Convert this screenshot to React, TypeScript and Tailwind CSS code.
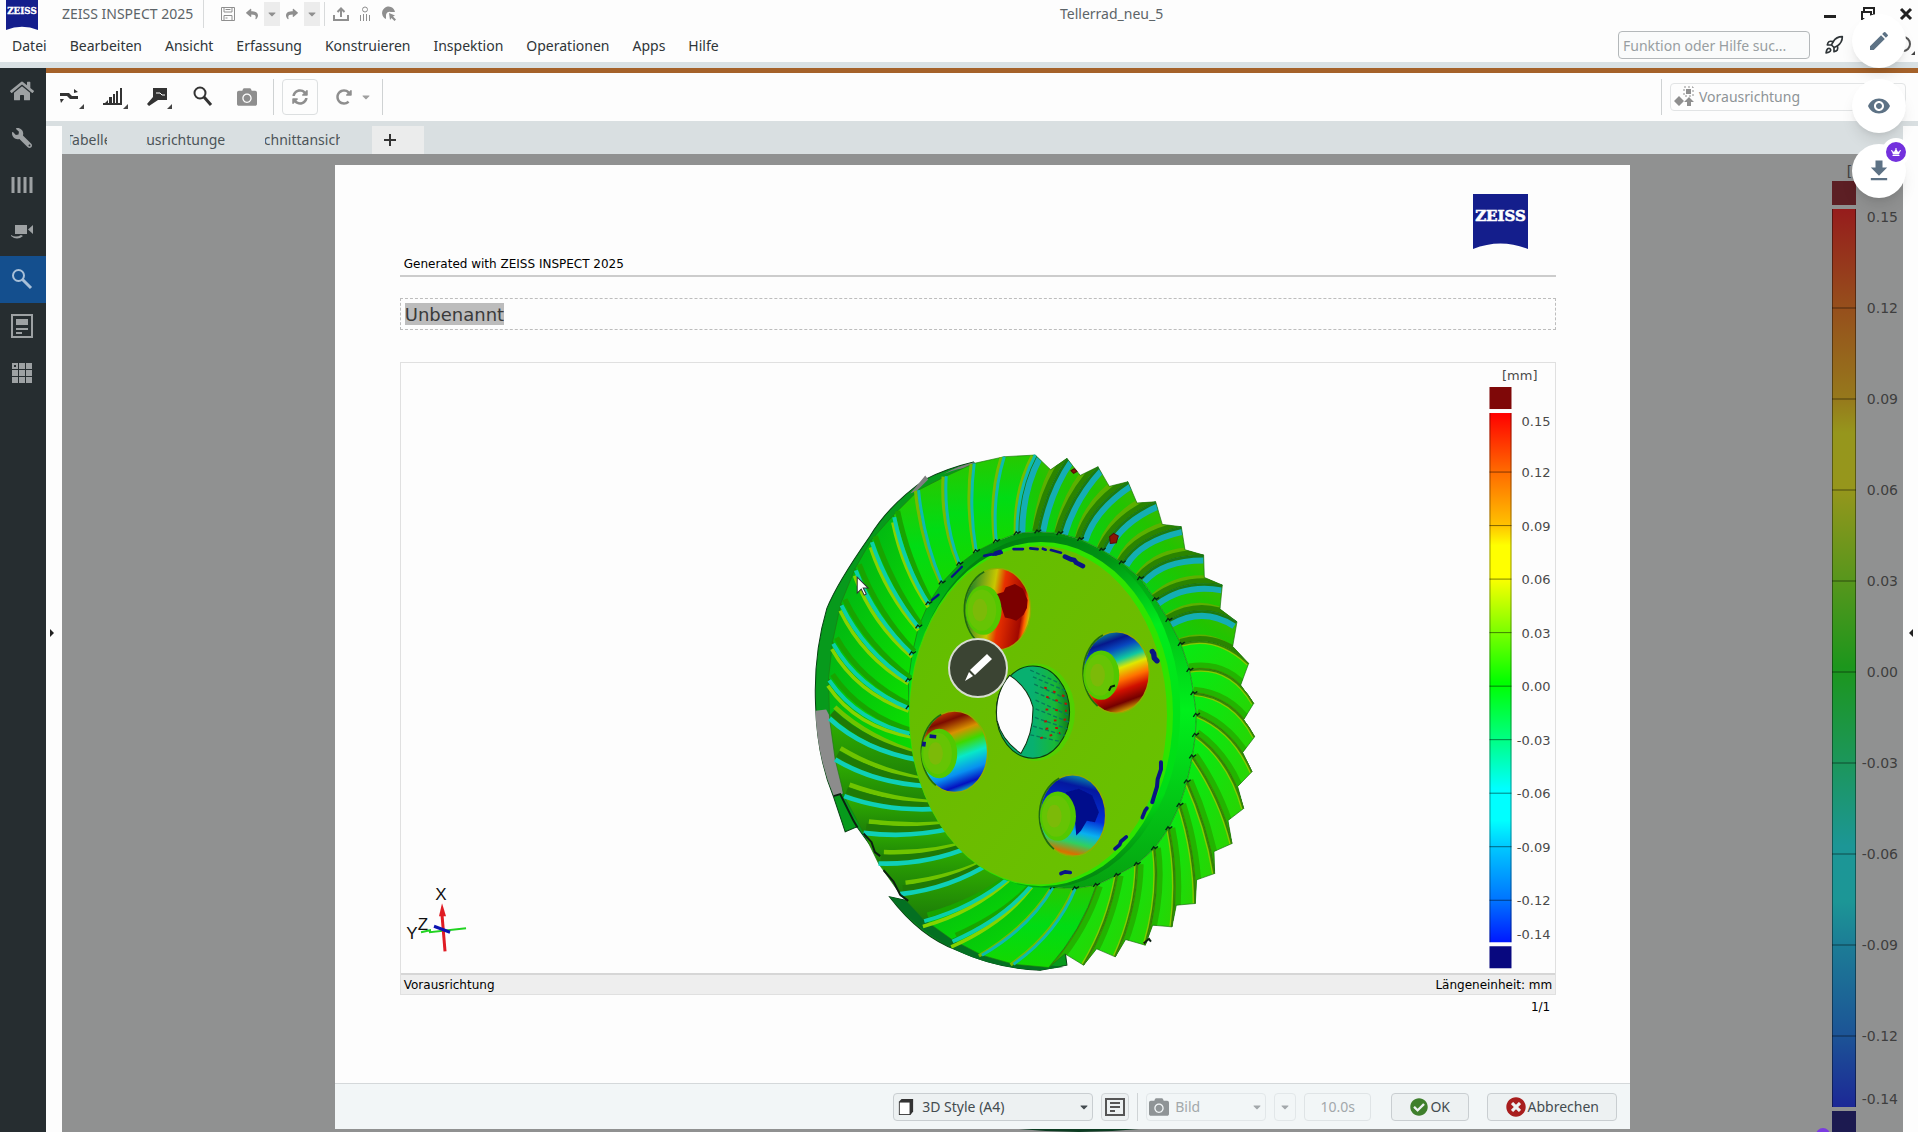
import type { ReactNode } from 'react'
import {
  FaCamera,
  FaCaretDown,
  FaCheckCircle,
  FaCrown,
  FaHome,
  FaRedoAlt,
  FaReply,
  FaShare,
  FaSyncAlt,
  FaTimesCircle,
  FaWrench,
} from 'react-icons/fa'
import { MdEdit, MdFileDownload, MdVisibility } from 'react-icons/md'
import { Rocket } from 'lucide-react'

type ToothKind = 'left' | 'top' | 'right' | 'bottom' | 'shade'
type Tooth = { p: [number, number, number, number, number, number]; kind: ToothKind }

const MENU = ['Datei', 'Bearbeiten', 'Ansicht', 'Erfassung', 'Konstruieren', 'Inspektion', 'Operationen', 'Apps', 'Hilfe']

// tip, control and root point of every tooth flank, clockwise from twelve o'clock
const TEETH: Tooth[] = [
  { p: [612, 50, 575, 170, 588, 304], kind: 'top' },
  { p: [705, 45, 650, 150, 650, 280], kind: 'top' },
  { p: [800, 55, 735, 150, 712, 275], kind: 'right' },
  { p: [893, 80, 810, 170, 778, 280], kind: 'right' },
  { p: [983, 125, 870, 200, 840, 298], kind: 'right' },
  { p: [1066, 185, 950, 235, 905, 330], kind: 'right' },
  { p: [1143, 260, 1010, 290, 965, 368], kind: 'right' },
  { p: [1210, 345, 1080, 345, 1020, 415], kind: 'right' },
  { p: [1266, 435, 1150, 415, 1065, 478], kind: 'right' },
  { p: [1310, 545, 1210, 480, 1105, 540], kind: 'right' },
  { p: [1345, 670, 1250, 580, 1142, 612], kind: 'right' },
  { p: [1360, 790, 1290, 670, 1168, 690], kind: 'bottom' },
  { p: [1363, 890, 1300, 770, 1180, 760], kind: 'bottom' },
  { p: [1355, 995, 1300, 870, 1188, 825], kind: 'bottom' },
  { p: [1330, 1105, 1290, 960, 1185, 885], kind: 'bottom' },
  { p: [1295, 1210, 1260, 1070, 1176, 950], kind: 'bottom' },
  { p: [1243, 1300, 1220, 1160, 1160, 1025], kind: 'bottom' },
  { p: [1185, 1390, 1185, 1240, 1138, 1095], kind: 'bottom' },
  { p: [1115, 1460, 1135, 1310, 1105, 1165], kind: 'bottom' },
  { p: [1035, 1515, 1080, 1360, 1062, 1225], kind: 'bottom' },
  { p: [945, 1550, 1008, 1410, 1010, 1272], kind: 'bottom' },
  { p: [850, 1575, 925, 1450, 950, 1305], kind: 'bottom' },
  { p: [745, 1582, 845, 1470, 888, 1335], kind: 'bottom' },
  { p: [640, 1572, 770, 1480, 825, 1345], kind: 'top' },
  { p: [545, 1545, 690, 1460, 758, 1342], kind: 'top' },
  { p: [455, 1498, 610, 1430, 695, 1330], kind: 'left' },
  { p: [370, 1437, 520, 1395, 630, 1306], kind: 'left' },
  { p: [300, 1362, 450, 1345, 570, 1268], kind: 'shade' },
  { p: [235, 1270, 380, 1275, 515, 1218], kind: 'shade' },
  { p: [190, 1178, 330, 1195, 462, 1163], kind: 'shade' },
  { p: [132, 1068, 260, 1115, 415, 1106], kind: 'shade' },
  { p: [105, 958, 220, 1028, 380, 1038], kind: 'shade' },
  { p: [88, 835, 190, 930, 357, 960], kind: 'shade' },
  { p: [85, 715, 170, 840, 338, 880], kind: 'left' },
  { p: [97, 605, 170, 735, 326, 802], kind: 'left' },
  { p: [122, 490, 190, 630, 325, 720], kind: 'left' },
  { p: [165, 385, 220, 530, 336, 640], kind: 'left' },
  { p: [213, 300, 260, 440, 355, 560], kind: 'left' },
  { p: [280, 225, 310, 370, 385, 490], kind: 'left' },
  { p: [355, 150, 370, 300, 425, 428], kind: 'top' },
  { p: [438, 108, 430, 250, 478, 372], kind: 'top' },
  { p: [522, 70, 505, 200, 528, 334], kind: 'top' },
]

const FLANK: Record<ToothKind, string> = {
  left: 'url(#flankLeft)',
  top: 'url(#flankTop)',
  right: 'url(#flankRight)',
  bottom: 'url(#flankBottom)',
  shade: 'url(#flankShade)',
}

const isClipped = ({ kind }: Tooth) => kind === 'right' || kind === 'bottom'

const mix = (a: number, b: number, t: number) => Math.round(a + (b - a) * t)

function flankPath(prev: Tooth, cur: Tooth) {
  const [ax, ay, bx, by, cx, cy] = prev.p
  const [dx, dy, ex, ey, fx, fy] = cur.p
  // gap between two tooth ends, pulled in towards the hub
  const nx = mix(mix(ax, dx, 0.5), 715, 0.05)
  const ny = mix(mix(ay, dy, 0.5), 825, 0.05)
  const notch = isClipped(cur) ? `L${nx} ${ny}` : ''
  return `M${dx} ${dy}Q${ex} ${ey} ${fx} ${fy}L${cx} ${cy}Q${bx} ${by} ${ax} ${ay}${notch}Z`
}

function edgePath({ p }: Tooth) {
  return `M${p[0]} ${p[1]}Q${p[2]} ${p[3]} ${p[4]} ${p[5]}`
}

function shifted({ p, kind }: Tooth, dx: number, dy: number) {
  return edgePath({ kind, p: [p[0] + dx, p[1] + dy, p[2] + dx, p[3] + dy, p[4] + dx / 2, p[5] + dy / 2] })
}

// teeth on the right half show their own end faces, so their bands stay inside the flank
function ClippedTooth({ id, prev, tooth }: { id: string; prev: Tooth; tooth: Tooth }) {
  const d = flankPath(prev, tooth)
  return (
    <g fill="none">
      <clipPath id={id}>
        <path d={d} />
      </clipPath>
      <path d={d} fill={FLANK[tooth.kind]} />
      {tooth.kind === 'right' ? (
        <g clipPath={`url(#${id})`}>
          <path d={edgePath(prev)} stroke="#14aeb4" strokeWidth="50" />
          <path d={edgePath(prev)} stroke="#1c7a10" strokeWidth="14" />
          <path d={shifted(tooth, -15, -17)} stroke="#5cb000" strokeWidth="16" />
          <path d={edgePath(tooth)} stroke="#2a8400" strokeWidth="32" />
        </g>
      ) : (
        <g clipPath={`url(#${id})`}>
          <path d={edgePath(prev)} stroke="#84cc00" strokeWidth="16" />
          <path d={edgePath(prev)} stroke="#3f8a00" strokeWidth="8" />
          <path d={edgePath(tooth)} stroke="#22b400" strokeWidth="40" />
          <path d={edgePath(tooth)} stroke="#3f8a00" strokeWidth="8" />
        </g>
      )}
      <path d={d} stroke="#1d7010" strokeWidth="2" />
    </g>
  )
}

function ToothEdge({ tooth }: { tooth: Tooth }) {
  const rx = tooth.p[4]
  const ry = tooth.p[5]
  const nick = <path d={`M${rx - 9} ${ry + 5}l7 -10 5 5 8 -6`} stroke="#042a10" strokeWidth="4" />
  if (isClipped(tooth)) {
    return <g fill="none">{nick}</g>
  }
  if (tooth.kind === 'shade') {
    return (
      <g fill="none">
        <path d={shifted(tooth, 16, -34)} stroke="#6fc400" strokeWidth="14" />
        <path d={shifted(tooth, 8, -17)} stroke="#1f7a06" strokeWidth="20" />
        <path d={edgePath(tooth)} stroke="#0fd0b8" strokeWidth="14" />
        {nick}
      </g>
    )
  }
  if (tooth.kind === 'left') {
    return (
      <g fill="none">
        <path d={shifted(tooth, 12, -12)} stroke="#18a400" strokeWidth="16" />
        <path d={shifted(tooth, -2, 22)} stroke="#86d400" strokeWidth="11" />
        <path d={shifted(tooth, 2, 6)} stroke="#0ad0a8" strokeWidth="12" />
        {nick}
      </g>
    )
  }
  return (
    <g fill="none">
      <path d={shifted(tooth, -9, 2)} stroke="#74bc00" strokeWidth="10" />
      <path d={edgePath(tooth)} stroke="#0cbcae" strokeWidth="9" />
      {nick}
    </g>
  )
}

function Bore({ cx, cy, fill, bossX, bossY, children }: { cx: number; cy: number; fill: string; bossX: number; bossY: number; children?: ReactNode }) {
  return (
    <g>
      <ellipse cx={cx} cy={cy} rx="99" ry="122" fill={fill} stroke="#8fae00" strokeWidth="4" />
      <path d={`M${cx - 40} ${cy - 112}A99 122 0 0 0 ${cx - 56} ${cy + 101}`} fill="none" stroke="#1f6a10" strokeWidth="5" />
      {children}
      <ellipse cx={bossX + 5} cy={bossY} rx="54" ry="74" fill="#52c800" />
      <ellipse cx={bossX} cy={bossY} rx="43" ry="62" fill="#66c404" />
      <ellipse cx={bossX - 6} cy={bossY} rx="22" ry="34" fill="#7cba08" />
    </g>
  )
}

function Gear() {
  const rim = TEETH.map(({ p }) => `${p[4]},${p[5]}`).join(' ')
  return (
    <g transform="translate(399 77) scale(0.3333)">
      <path d="M520 66Q440 85 375 118Q265 195 208 290Q110 430 80 505Q40 640 46 790Q50 950 100 1070L135 1175L170 1160L300 1340L360 1390L268 1370Q360 1490 470 1530Q590 1585 720 1590L800 1575L700 800Z" fill="#079a1c" stroke="#064012" strokeWidth="3" />
      <path d="M268 1370Q440 1580 720 1590L790 1580Q560 1560 370 1437L330 1385Z" fill="#047022" />
      <path d="M46 812L78 808L108 865L128 1060L102 1070Q50 950 46 812Z" fill="#8c8c8c" />
      <path d="M330 160Q360 125 375 106L384 118L350 152ZM430 102Q480 75 524 66L522 80Q470 84 430 102Z" fill="#7e7e7e" />
      <polygon points={rim} fill="url(#rim)" />
      {TEETH.map((tooth, i) => {
        const prev = TEETH[(i + TEETH.length - 1) % TEETH.length]
        if (isClipped(tooth)) {
          return <ClippedTooth key={i} id={`tooth${i}`} prev={prev} tooth={tooth} />
        }
        return <path key={i} d={flankPath(prev, tooth)} fill={FLANK[tooth.kind]} stroke="#1d7a10" strokeWidth="2" />
      })}
      {TEETH.map((tooth, i) => (
        <ToothEdge key={i} tooth={tooth} />
      ))}
      <path d="M100 1068l20 -6 40 80 12 20M190 1180l24 26 10 30 16 12M250 1290l30 34 20 40 24 18M1030 1510l16 -14 6 8" fill="none" stroke="#0b2010" strokeWidth="6" />

      <ellipse cx="735" cy="815" rx="405" ry="528" fill="url(#groove)" />
      <ellipse cx="722" cy="822" rx="396" ry="516" fill="#2ee400" />
      <ellipse cx="714" cy="825" rx="386" ry="508" fill="url(#face)" />
      <g fill="none" stroke="#0a1484" strokeLinecap="round" strokeLinejoin="round">
        <path d="M552 347l22 -4M578 344l26 -6M640 327l28 0M690 325l22 2M752 330l30 8M728 326l8 3" strokeWidth="8" />
        <path d="M794 350l18 8 10 2 6 8 20 10M586 340l14 -4" strokeWidth="14" />
        <path d="M1056 634l4 6 2 14 8 8" strokeWidth="16" />
        <path d="M1082 966l0 22 -10 30 -2 22 -14 46" strokeWidth="12" />
        <path d="M1040 1104l-6 8 -8 20M978 1190l-16 14 -4 10 -14 12M782 1300l12 -5 16 2" strokeWidth="11" />
        <path d="M455 410l30 -30M395 480l20 -16" strokeWidth="7" />
      </g>

      <Bore cx={592} cy={507} fill="url(#boreA)" bossX={545} bossY={510}>
        <path d="M590 462l20 -6 6 -14 28 -10 24 14 14 34 -2 24 -10 20 -22 18 -16 -6 -18 -4 -10 -30 -14 -16z" fill="#7c0000" filter="url(#soften)" />
      </Bore>
      <Bore cx={948} cy={697} fill="url(#boreB)" bossX={898} bossY={705} />
      <path d="M926 752l6 -12 12 -4" fill="none" stroke="#082008" strokeWidth="6" />
      <Bore cx={463} cy={935} fill="url(#boreC)" bossX={412} bossY={940} />
      <path d="M388 888l20 2M372 905l-2 14" fill="none" stroke="#0a1484" strokeWidth="11" />
      <Bore cx={817} cy={1126} fill="url(#boreD)" bossX={768} bossY={1128}>
        <path d="M796 1056l40 -10 40 20 20 50 -12 30 -24 -4 -18 30 -14 14 -6 -70z" fill="#06108c" filter="url(#soften)" />
      </Bore>

      <ellipse cx="706" cy="816" rx="118" ry="146" fill="#52d000" />
      <ellipse cx="698" cy="816" rx="110" ry="138" fill="url(#wall)" stroke="#0c3c10" strokeWidth="3" />
      <g stroke="#077a5a" strokeWidth="4" strokeDasharray="12 7">
        <path d="M690 690L780 730M698 710L796 752M702 732L802 778M704 756L806 800M706 780L806 826M706 806L806 846M704 832L802 866M698 858L794 886M690 884L780 904" />
      </g>
      <g stroke="#b01808" strokeWidth="6" strokeDasharray="8 21">
        <path d="M732 742L800 772M738 770L800 792M736 808L800 812M732 844L800 838M736 866L790 862M720 894L780 878" />
      </g>
      <path d="M628 706Q582 760 590 840Q604 900 662 940Q700 880 698 800Q682 740 628 706Z" fill="#fdfdfd" stroke="#103010" strokeWidth="3" />
      <path d="M812 92l10 -6 8 8 -10 6zM928 290l12 -10 14 8 -6 20 -18 2z" fill="#8c1408" stroke="#501008" strokeWidth="3" />
    </g>
  )
}

const SCALE_STOPS: [number, string][] = [
  [0, '#ff0000'],
  [11, '#ff6a00'],
  [21, '#ffc000'],
  [25, '#ffff00'],
  [31, '#ffff00'],
  [41, '#80ff00'],
  [51, '#00ff00'],
  [62, '#00ff88'],
  [71, '#00ffff'],
  [77, '#00ffff'],
  [82, '#00c8ff'],
  [92, '#0074ff'],
  [100, '#0018ff'],
]
const SCALE_TICKS = ['0.12', '0.09', '0.06', '0.03', '0.00', '-0.03', '-0.06', '-0.09', '-0.12']

type ScaleProps = {
  id: string
  x: number
  width: number
  top: number
  bottom: number
  firstTick: number
  step: number
  labelX: number
  fontSize: number
  muted?: boolean
}

// deviation colour bar with over- and underflow boxes
function ColorScale({ id, x, width, top, bottom, firstTick, step, labelX, fontSize, muted }: ScaleProps) {
  const ink = muted ? '#3e3e3e' : '#4a4a4a'
  return (
    <g fontFamily="DejaVu Sans, Verdana, sans-serif" fontSize={fontSize} fill={ink} textAnchor="end">
      <defs>
        <linearGradient id={id} x1="0" y1="0" x2="0" y2="1">
          {SCALE_STOPS.map(([offset, color]) => (
            <stop key={offset} offset={`${offset}%`} stopColor={color} />
          ))}
        </linearGradient>
      </defs>
      <text x={labelX - 13} y={top - 33}>[mm]</text>
      <rect x={x} y={top - width - 4} width={width} height={width} fill={muted ? '#5c1f24' : '#7f0808'} />
      {muted && <rect x={x} y={top} width={width} height={bottom - top} fill="#363636" />}
      <rect x={x} y={top} width={width} height={bottom - top} fill={`url(#${id})`} opacity={muted ? 0.48 : 1} />
      <path d={`M${x + 0.5} ${top}V${bottom}M${x + width - 0.5} ${top}V${bottom}`} stroke="#000" strokeOpacity="0.4" />
      <rect x={x} y={bottom + 4} width={width} height={width} fill={muted ? '#1c1a50' : '#08087f'} />
      <text x={labelX} y={top + 13}>0.15</text>
      {SCALE_TICKS.map((label, i) => (
        <g key={label}>
          <path d={`M${x} ${firstTick + i * step}h${width}`} stroke="#000" strokeOpacity="0.5" />
          <text x={labelX} y={firstTick + i * step + 5}>{label}</text>
        </g>
      ))}
      <text x={labelX} y={bottom - 3}>-0.14</text>
    </g>
  )
}

function Scene() {
  return (
    <svg viewBox="0 0 1154 610" className="block w-full" role="img" aria-label="Tellerrad">
      <defs>
        <filter id="soften"><feGaussianBlur stdDeviation="2" /></filter>
        <linearGradient id="flankLeft" x1="0" y1="0" x2="1" y2="1"><stop offset="0" stopColor="#00b414" /><stop offset="1" stopColor="#0ce000" /></linearGradient>
        <linearGradient id="flankTop" x1="0" y1="0" x2="0" y2="1"><stop offset="0" stopColor="#28c800" /><stop offset="0.5" stopColor="#00dc14" /><stop offset="1" stopColor="#14d800" /></linearGradient>
        <linearGradient id="flankRight" x1="1" y1="0" x2="0" y2="1"><stop offset="0" stopColor="#4cb400" /><stop offset="0.4" stopColor="#22c400" /><stop offset="1" stopColor="#04d414" /></linearGradient>
        <linearGradient id="flankBottom" x1="0" y1="0" x2="1" y2="1"><stop offset="0" stopColor="#04ec14" /><stop offset="1" stopColor="#30d000" /></linearGradient>
        <linearGradient id="flankShade" x1="0" y1="0" x2="0" y2="1"><stop offset="0" stopColor="#30b000" /><stop offset="1" stopColor="#1c7c08" /></linearGradient>
        <linearGradient id="rim" x1="0" y1="0" x2="0" y2="1"><stop offset="0" stopColor="#028c10" /><stop offset="0.5" stopColor="#00f01c" /><stop offset="1" stopColor="#06a010" /></linearGradient>
        <linearGradient id="groove" x1="0.3" y1="0" x2="0.6" y2="1"><stop offset="0" stopColor="#007c10" /><stop offset="0.18" stopColor="#009414" /><stop offset="0.4" stopColor="#00ec1c" /><stop offset="0.85" stopColor="#00dc14" /><stop offset="1" stopColor="#048410" /></linearGradient>
        <linearGradient id="face" x1="0" y1="0" x2="1" y2="1"><stop offset="0" stopColor="#5ec000" /><stop offset="0.5" stopColor="#6cbc00" /><stop offset="1" stopColor="#66c400" /></linearGradient>
        <linearGradient id="boreA" x1="0" y1="0.3" x2="1" y2="0.5"><stop offset="0" stopColor="#0c7a30" /><stop offset="0.42" stopColor="#c8c800" /><stop offset="0.56" stopColor="#e83000" /><stop offset="0.88" stopColor="#a00800" /><stop offset="0.94" stopColor="#ff6000" /><stop offset="1" stopColor="#c8d000" /></linearGradient>
        <linearGradient id="boreB" x1="0.3" y1="0" x2="0.6" y2="1"><stop offset="0" stopColor="#0a9a9a" /><stop offset="0.14" stopColor="#06188c" /><stop offset="0.24" stopColor="#0848c0" /><stop offset="0.38" stopColor="#10c8a0" /><stop offset="0.48" stopColor="#e0e800" /><stop offset="0.62" stopColor="#ff7000" /><stop offset="0.74" stopColor="#d01000" /><stop offset="0.88" stopColor="#740000" /><stop offset="1" stopColor="#d8b000" /></linearGradient>
        <linearGradient id="boreC" x1="0.35" y1="0" x2="0.65" y2="1"><stop offset="0" stopColor="#c84000" /><stop offset="0.12" stopColor="#7c0c00" /><stop offset="0.28" stopColor="#d89000" /><stop offset="0.42" stopColor="#40d800" /><stop offset="0.58" stopColor="#08e8c8" /><stop offset="0.76" stopColor="#0890f0" /><stop offset="0.9" stopColor="#0410c0" /><stop offset="1" stopColor="#10d0c0" /></linearGradient>
        <linearGradient id="boreD" x1="0.6" y1="0" x2="0.4" y2="1"><stop offset="0" stopColor="#0890a8" /><stop offset="0.14" stopColor="#0418a0" /><stop offset="0.5" stopColor="#0430d8" /><stop offset="0.68" stopColor="#08b0f0" /><stop offset="0.82" stopColor="#30d060" /><stop offset="0.95" stopColor="#d87000" /><stop offset="1" stopColor="#b0a000" /></linearGradient>
        <linearGradient id="wall" x1="0" y1="0" x2="1" y2="0"><stop offset="0.5" stopColor="#08b070" /><stop offset="0.8" stopColor="#18b838" /><stop offset="1" stopColor="#107818" /></linearGradient>
      </defs>
      <Gear />
      <g fontFamily="Liberation Sans, Arial, sans-serif" fontSize="17" fill="#111" textAnchor="middle">
        <text x="40" y="537">X</text>
        <text x="22" y="567">Z</text>
        <text x="11" y="576">Y</text>
      </g>
      <g fill="none" strokeWidth="2">
        <path d="M20 569l9 -2 0 2 36 -4" stroke="#22d322" />
        <path d="M41 552L44 588" stroke="#e01c24" strokeWidth="3" />
        <path d="M33 563l16 6" stroke="#0b13b0" strokeWidth="3" />
      </g>
      <path d="M38 553L41 540L45 553Z" fill="#e01c24" />
      <ColorScale id="scaleReport" x={1088} width={22} top={50} bottom={579} firstTick={109} step={53.5} labelX={1149} fontSize={13} />
      <path d="M456 214L456 230L460 226L463 232L465 231L462 225L467 225Z" fill="#fff" stroke="#333" />
    </svg>
  )
}

function ZeissLogo({ className }: { className: string }) {
  return (
    <svg viewBox="0 0 55 55" className={className} role="img" aria-label="ZEISS">
      <path d="M0 0H55V55Q27.500 44 0 55Z" fill="#141e8c" />
      <text x="27.500" y="27" textAnchor="middle" fontFamily="DejaVu Serif, serif" fontWeight="bold" fontSize="15" fill="#fff" stroke="#fff" strokeWidth="0.6">ZEISS</text>
    </svg>
  )
}

function IconButton({ label, className = '', children }: { label: string; className?: string; children: ReactNode }) {
  return (
    <button type="button" aria-label={label} className={`flex shrink-0 items-center justify-center ${className}`}>
      {children}
    </button>
  )
}

const Corner = () => <path d="M29 28V23L24 28Z" fill="#444" />

function TitleBar() {
  return (
    <div className="flex h-7 items-center text-sm text-[#5c6468]">
      <ZeissLogo className="-mt-0.5 ml-1.5 h-8 w-8 shrink-0 self-start" />
      <span className="ml-6 whitespace-nowrap">ZEISS INSPECT 2025</span>
      <span className="ml-2.5 h-7 w-px bg-[#d8dadb]" />
      <div className="ml-3 flex items-center text-[#8f8f8f]">
        <IconButton label="Speichern" className="h-6 w-6">
          <svg viewBox="0 0 16 16" className="h-4 w-4" fill="none" stroke="currentColor">
            <path d="M1.500 1.500h13v13h-13zM4 1.500v4.500h8v-4.500M5.500 3.500h5M4 14.500v-5h8v5M5.500 12h2" />
          </svg>
        </IconButton>
        <IconButton label="Rückgängig" className="h-6 w-6"><FaReply className="h-3 w-3" /></IconButton>
        <IconButton label="Rückgängig Verlauf" className="h-6 w-4 bg-[#ececec]"><FaCaretDown className="h-3 w-3" /></IconButton>
        <IconButton label="Wiederholen" className="h-6 w-6"><FaShare className="h-3 w-3" /></IconButton>
        <IconButton label="Wiederholen Verlauf" className="h-6 w-4 bg-[#ececec]"><FaCaretDown className="h-3 w-3" /></IconButton>
        <span className="ml-1 h-6 w-px bg-[#d8dadb]" />
        <IconButton label="Exportieren" className="ml-1 h-6 w-6">
          <svg viewBox="0 0 16 16" className="h-4 w-4" fill="none" stroke="currentColor" strokeWidth="2">
            <path d="M1 9v5h14V9M8 11V3M4.500 6L8 2.500L11.500 6" />
          </svg>
        </IconButton>
        <IconButton label="Messpunkte" className="h-6 w-6">
          <svg viewBox="0 0 16 16" className="h-4 w-4" fill="none" stroke="currentColor">
            <circle cx="8" cy="3.500" r="2.500" />
            <path d="M3.500 9v6M6.500 8v7M9.500 8v7M12.500 9v6" />
          </svg>
        </IconButton>
        <IconButton label="Suchen" className="h-6 w-6">
          <svg viewBox="0 0 16 16" className="h-4 w-4">
            <path d="M14 6A6.500 6.500 0 1 0 5 13L5 9Q6 5 10 6Z" fill="currentColor" />
            <path d="M8 7l1 7 1.500 -2 3 3 1.500 -1.500 -3 -3 2 -1z" fill="currentColor" />
          </svg>
        </IconButton>
      </div>
      <span className="flex-1 pl-96 text-center">Tellerrad_neu_5</span>
      <div className="flex w-[480px] items-center justify-end gap-[22px] pr-1 text-[#222]">
        <IconButton label="Minimieren" className="h-4 w-4"><span className="mt-1 h-[3px] w-3 bg-[#222]" /></IconButton>
        <IconButton label="Wiederherstellen" className="h-4 w-4">
          <svg viewBox="0 0 16 16" className="h-4 w-4" fill="none" stroke="currentColor" strokeWidth="2"><path d="M4 6V2h10v7h-3M2 6h9v7H2z" /></svg>
        </IconButton>
        <IconButton label="Schließen" className="h-4 w-4">
          <svg viewBox="0 0 16 16" className="h-4 w-4" fill="none" stroke="currentColor" strokeWidth="3"><path d="M3 3l10 10M13 3L3 13" /></svg>
        </IconButton>
      </div>
    </div>
  )
}

function MenuBar() {
  return (
    <div className="flex h-[34px] items-center pl-3 text-sm text-[#2f3538]">
      <nav className="flex gap-[23px] pt-0.5">
        {MENU.map((item) => (
          <a key={item} href="#menu">{item}</a>
        ))}
      </nav>
      <div className="ml-auto flex items-center">
        <input
          type="search"
          aria-label="Funktion oder Hilfe suchen"
          placeholder="Funktion oder Hilfe suc..."
          className="h-7 w-48 rounded border border-[#b4b8ba] bg-[#fafbfb] px-1 text-sm placeholder:text-[#989ea1]"
        />
        <IconButton label="Neuigkeiten" className="ml-3 h-6 w-6">
          <Rocket className="h-5 w-5" strokeWidth={2} />
        </IconButton>
        <IconButton label="Hilfe" className="ml-12 h-6 w-6">
          <svg viewBox="0 0 24 24" className="h-6 w-6"><circle cx="9" cy="11" r="7" fill="none" stroke="#555" strokeWidth="2" /><path d="M21 22V18L17 22Z" fill="#444" /></svg>
        </IconButton>
      </div>
    </div>
  )
}

const SIDE_ICONS: { label: string; icon: ReactNode }[] = [
  { label: 'Start', icon: <FaHome className="h-6 w-6" /> },
  { label: 'Einstellungen', icon: <FaWrench className="h-5 w-5 -scale-x-100" /> },
  {
    label: 'Streifen',
    icon: <svg viewBox="0 0 24 24" className="h-6 w-6" stroke="currentColor" strokeWidth="3"><path d="M3 4v16M9 4v16M15 4v16M21 4v16" /></svg>,
  },
  {
    label: 'Aufnahme',
    icon: (
      <svg viewBox="0 0 24 24" className="h-6 w-6" fill="currentColor">
        <path d="M5 5h12v9H5zM18 9.500L23 5v9zM1 15q5 3 10 0l2 1q-6 5 -12 0z" />
      </svg>
    ),
  },
  {
    label: 'Inspektion',
    icon: <svg viewBox="0 0 24 24" className="h-6 w-6" fill="none" stroke="currentColor"><circle cx="8.500" cy="8.500" r="5.500" strokeWidth="2" /><path d="M12.500 12.500L21 21" strokeWidth="3" /></svg>,
  },
  {
    label: 'Bericht',
    icon: (
      <svg viewBox="0 0 24 24" className="h-6 w-6" fill="none" stroke="currentColor" strokeWidth="2">
        <path d="M2 1h20v22H2zM6 15h12M6 19h6" /><path d="M6 5h12v6H6z" fill="currentColor" stroke="none" />
      </svg>
    ),
  },
  {
    label: 'Apps',
    icon: (
      <svg viewBox="0 0 24 24" className="h-6 w-6" fill="currentColor">
        <path d="M2 2h6v6H2zM9 2h6v6H9zM16 2h6v6h-6zM2 9h6v6H2zM9 9h6v6H9zM16 9h6v6h-6zM2 16h6v6H2zM9 16h6v6H9zM16 16h6v6h-6z" />
        <path d="M4 4h2v2H4z" fill="#262d30" />
      </svg>
    ),
  },
]

function SideNav() {
  return (
    <nav className="flex w-[46px] shrink-0 flex-col bg-[#262d30]">
      {SIDE_ICONS.map(({ label, icon }) => (
        <IconButton
          key={label}
          label={label}
          className={label === 'Inspektion' ? 'h-[47px] bg-[#144f8e] pr-0.5 pb-0.5 text-[#a9c0d8]' : 'h-[47px] pr-0.5 pb-0.5 text-[#9da1a3]'}
        >
          {icon}
        </IconButton>
      ))}
    </nav>
  )
}

function Toolbar() {
  return (
    <div className="flex h-12 shrink-0 items-center bg-[#fdfdfd] pl-[3px] text-[#333]">
      <IconButton label="Ausrichtung" className="h-9 w-11">
        <svg viewBox="0 0 32 32" className="h-8 w-8"><path d="M5 12h9l3 3h6v3h-8l-3 -3H5zM5 18l4 0 -3 4zM19 8l4 3 -4 1z" fill="currentColor" /><Corner /></svg>
      </IconButton>
      <IconButton label="Diagramm" className="h-9 w-11">
        <svg viewBox="0 0 32 32" className="h-8 w-8"><path d="M4 22h19v2H4zM6 22l3 -3v3zM10 16h3v6h-3zM14 13h2v9h-2zM17 10h2v12h-2zM21 7h2v15h-2z" fill="currentColor" /><Corner /></svg>
      </IconButton>
      <IconButton label="Beschriftung" className="h-9 w-11">
        <svg viewBox="0 0 32 32" className="h-8 w-8"><path d="M10 7h14v12h-9L6 25l-2 -2 6 -7z" fill="currentColor" /><path d="M13 12h4l2 2h3" stroke="#fff" fill="none" /><Corner /></svg>
      </IconButton>
      <IconButton label="Lupe" className="h-9 w-11">
        <svg viewBox="0 0 24 24" className="h-6 w-6" fill="none" stroke="currentColor"><circle cx="9" cy="8" r="5.500" strokeWidth="2" /><path d="M13 12L20 20" strokeWidth="3" /></svg>
      </IconButton>
      <IconButton label="Foto" className="h-9 w-11 text-[#8e8e8e]"><FaCamera className="h-5 w-5" /></IconButton>
      <span className="ml-1 h-9 w-px bg-[#cfd2d3]" />
      <IconButton label="Aktualisieren" className="ml-2 h-9 w-9 rounded border border-[#dcdfe0] text-[#8e8e8e]"><FaSyncAlt className="h-4 w-4" /></IconButton>
      <IconButton label="Neu berechnen" className="ml-2 h-9 w-9 text-[#8e8e8e]"><FaRedoAlt className="h-4 w-4" /></IconButton>
      <IconButton label="Neu berechnen Optionen" className="h-9 w-2 text-[#a0a0a0]"><FaCaretDown className="h-3 w-3" /></IconButton>
      <span className="ml-3 h-9 w-px bg-[#cfd2d3]" />
      <span className="ml-auto h-9 w-px bg-[#cfd2d3]" />
      <button type="button" className="mr-3 ml-2 flex h-7 w-[236px] items-center gap-1 rounded border border-[#e2e4e5] px-0.5 text-sm text-[#8e9497]">
        <svg viewBox="0 0 22 22" className="h-[22px] w-[22px]" fill="#8e8e8e">
          <path d="M1 15l5 -5 5 5 -5 5zM16 11l5 5h-3v4h-4v-4h-3zM13 3h5v5h-5z" />
          <path d="M11 1h9v9h-9z" fill="none" stroke="#8e8e8e" strokeDasharray="2 2" />
        </svg>
        Vorausrichtung
      </button>
    </div>
  )
}

function TabStrip() {
  return (
    <div className="flex h-7 shrink-0 bg-[#d9dfe1] pl-2 text-sm text-[#4c5458]">
      <button type="button" className="flex w-[37px] items-center justify-center overflow-hidden whitespace-nowrap">Tabelle</button>
      <button type="button" className="ml-[39px] flex w-[79px] items-center justify-center overflow-hidden whitespace-nowrap">Ausrichtungen</button>
      <button type="button" className="ml-10 flex w-[75px] items-center justify-center overflow-hidden whitespace-nowrap">Schnittansicht</button>
      <button type="button" aria-label="Neuer Tab" className="ml-8 w-[52px] bg-[#ebecec] pr-6 pl-2">
        <svg viewBox="0 0 14 14" className="mx-auto h-3.5 w-3.5" stroke="#333" strokeWidth="2"><path d="M7 1v12M1 7h12" /></svg>
      </button>
    </div>
  )
}

function Report() {
  return (
    <div className="flex-1 bg-[#fdfdfd] pt-[29px] pr-[74px] pl-[65px] font-['DejaVu_Sans',Verdana,sans-serif] text-xs text-black">
      <header className="flex h-[83px] justify-between border-b-2 border-[#cccccc] pr-7 pl-1">
        <p className="self-end pb-[3px]">Generated with ZEISS INSPECT 2025</p>
        <ZeissLogo className="h-[55px] w-[55px]" />
      </header>
      <div className="mt-[21px] flex h-8 items-center border border-dashed border-[#bdbdbd] pl-1">
        <input aria-label="Titel" defaultValue="Unbenannt" className="field-sizing-content h-[22px] bg-[#bcbcbc] text-lg leading-5 text-[#3a3a3a]" />
      </div>
      <figure className="mt-8 border border-[#e0e0e0]">
        <div className="relative">
          <Scene />
          <button type="button" aria-label="Bearbeiten" className="absolute top-1/2 left-1/2 flex h-[60px] w-[60px] -translate-1/2 items-center justify-center rounded-full border-2 border-[#d6dcd0] bg-[#3b4433]">
            <svg viewBox="0 0 30 30" className="h-[30px] w-[30px]" fill="#fff"><path d="M24 1l5 5 -17 16 -5 -5zM6 19l4 4 -8 5z" /></svg>
          </button>
        </div>
        <figcaption className="flex h-[21px] items-center justify-between border-t-2 border-[#d6d6d6] bg-[#eeeeee] px-[3px]">
          <span>Vorausrichtung</span>
          <span>Längeneinheit: mm</span>
        </figcaption>
      </figure>
      <p className="mt-1 pr-1.5 text-right">1/1</p>
    </div>
  )
}

function ActionBar() {
  return (
    <footer className="flex h-[46px] shrink-0 items-center justify-end border-t border-[#d4d8da] bg-[#f2f6f7] pr-[13px] text-sm text-[#444c50]">
      <label className="relative flex h-7 w-[200px] items-center rounded border border-[#c9ced1] bg-[#edf1f2]">
        <svg viewBox="0 0 18 20" className="absolute left-1 h-[18px] w-4"><path d="M1 4l3 -3h13v14l-3 4H1z" fill="#333" /><path d="M2 5h11v13H2z" fill="#fff" /></svg>
        <select aria-label="Stil" className="h-full w-full appearance-none pl-7">
          <option>3D Style (A4)</option>
        </select>
        <FaCaretDown className="pointer-events-none absolute right-0.5 h-3 w-3" />
      </label>
      <IconButton label="Seitenvorlage" className="ml-2 h-7 w-7 rounded border border-[#d2d6d8] bg-[#edf1f2]">
        <svg viewBox="0 0 20 20" className="h-5 w-5" fill="none" stroke="#555" strokeWidth="2"><path d="M1 2h18v16H1zM5 6h10M5 10h10M5 14h5" /></svg>
      </IconButton>
      <span className="ml-2 h-7 w-px bg-[#cfd4d6]" />
      <label className="relative ml-2 flex h-7 w-[120px] items-center rounded border border-[#e2e7e9] text-[#a3a8ab]">
        <FaCamera className="absolute left-0.5 h-5 w-5 text-[#8f9496]" />
        <select aria-label="Medium" disabled className="h-full w-full appearance-none pl-7">
          <option>Bild</option>
        </select>
        <FaCaretDown className="absolute right-0.5 h-3 w-3" />
      </label>
      <IconButton label="Optionen" className="ml-2 h-7 w-[22px] rounded border border-[#e2e7e9] text-[#a3a8ab]"><FaCaretDown className="h-3 w-3" /></IconButton>
      <input aria-label="Dauer" disabled defaultValue="10.0s" className="ml-2 h-7 w-[67px] rounded border border-[#dfe4e6] text-center text-[#a3a8ab]" />
      <button type="button" className="ml-5 flex h-7 w-[78px] items-center justify-center gap-0.5 rounded border border-[#c9ced1] bg-[#edf1f2]">
        <FaCheckCircle className="h-[18px] w-[18px] text-[#3f7f2c]" /> OK
      </button>
      <button type="button" className="ml-[18px] flex h-7 w-[130px] items-center justify-center gap-0.5 rounded border border-[#c9ced1] bg-[#edf1f2]">
        <FaTimesCircle className="h-5 w-5 text-[#a81e1e]" /> Abbrechen
      </button>
    </footer>
  )
}

function FloatingTools() {
  const round = 'relative flex h-[54px] w-[54px] items-center justify-center rounded-full bg-white text-[#5d7285] shadow-lg'
  return (
    <div className="absolute top-3.5 right-3 flex flex-col gap-[11px]">
      <button type="button" aria-label="Stift" className={round}><MdEdit className="h-6 w-6" /></button>
      <button type="button" aria-label="Anzeigen" className={round}><MdVisibility className="h-6 w-6" /></button>
      <button type="button" aria-label="Herunterladen" className={round}>
        <MdFileDownload className="h-7 w-7" />
        <span className="absolute -top-1.5 -right-1 flex h-7 w-7 items-center justify-center rounded-full border-4 border-white bg-[#7331dd] text-white">
          <FaCrown className="h-2.5 w-2.5" />
        </span>
      </button>
    </div>
  )
}

export default function App() {
  return (
    <div className="relative flex h-screen flex-col overflow-hidden bg-[#fdfdfd] font-['Noto_Sans',sans-serif]">
      <header className="shrink-0">
        <TitleBar />
        <MenuBar />
      </header>
      <div className="h-1.5 shrink-0 bg-[#d9e1e4]" />

      <div className="flex min-h-0 flex-1">
        <SideNav />
        <div className="flex min-w-0 flex-1 flex-col">
          <div className="h-[5px] shrink-0 bg-[#a5622a]" />
          <Toolbar />
          <div className="h-[5px] shrink-0 bg-[#d9dfe1]" />
          <div className="flex min-h-0 flex-1">
            <button type="button" aria-label="Linke Leiste" className="flex w-4 shrink-0 items-center justify-center pt-2 pr-1">
              <svg viewBox="0 0 6 8" className="h-2 w-1.5"><path d="M1 0L5 4L1 8Z" fill="#222" /></svg>
            </button>
            <div className="flex min-w-0 flex-1 flex-col">
              <TabStrip />
              <main className="relative grid min-h-0 flex-1 grid-cols-[4fr_19fr_4fr] bg-[#909191] pt-[11px]">
                <svg viewBox="0 0 120 3" className="absolute bottom-0 left-[52%] h-[3px] w-[120px]"><path d="M0 0H120Q60 6 0 0Z" fill="#0c3c22" /></svg>
                <section className="col-start-2 mb-[3px] flex min-h-0 flex-col">
                  <Report />
                  <ActionBar />
                </section>
                <svg viewBox="0 0 83 978" className="absolute top-0 right-0 h-[978px] w-[83px] overflow-visible" role="img" aria-label="Farbskala">
                  <ColorScale id="scaleStage" x={12} width={24} top={55} bottom={953} firstTick={154} step={91} labelX={78} fontSize={14} muted />
                  <circle cx="3" cy="981" r="7" fill="#7a3be0" />
                </svg>
              </main>
            </div>
            <button type="button" aria-label="Rechte Leiste" className="flex w-[15px] shrink-0 items-center justify-center pt-2">
              <svg viewBox="0 0 6 8" className="h-2 w-1.5"><path d="M5 0L1 4L5 8Z" fill="#222" /></svg>
            </button>
          </div>
        </div>
      </div>
      <FloatingTools />
    </div>
  )
}
